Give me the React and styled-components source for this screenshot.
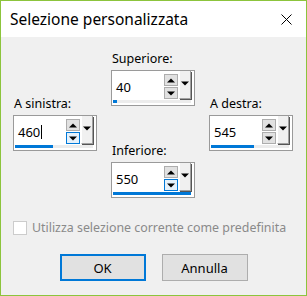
import { createGlobalStyle, styled } from 'styled-components';

const GlobalStyle = createGlobalStyle`
  html, body {
    margin: 0;
    padding: 0;
    background: #f0f0f0;
  }
  body {
    font-family: "Noto Sans", "Open Sans", sans-serif;
  }
`;

const Window = styled.div`
  width: 307px;
  height: 296px;
  box-sizing: border-box;
  border: 1px solid #8cc43c;
  background: #f0f0f0;
  display: flex;
  flex-direction: column;
`;

const TitleBar = styled.div`
  height: 36px;
  background: #ffffff;
  display: flex;
  align-items: center;
  justify-content: space-between;
  padding: 0 14px 0 9px;
  font-size: 15.5px;
  color: #000;
`;

const Title = styled.div`
  padding-bottom: 1px;
`;

const Fields = styled.div`
  display: flex;
  gap: 14px;
  padding: 0 12px;
`;

const Column = styled.div`
  width: 84px;
  display: flex;
  flex-direction: column;
  padding-top: ${(p) => p.top}px;
`;

const Group = styled.div`
  display: flex;
  flex-direction: column;
  gap: 3px;
  margin-bottom: ${(p) => p.after || 0}px;
`;

const Label = styled.div`
  font-size: 12.5px;
  line-height: 16px;
  color: #000;
  padding-left: 1px;
`;

const Box = styled.div`
  height: 36px;
  box-sizing: border-box;
  border: 1px solid #9a9a9a;
  background: #fff;
  display: flex;
  flex-direction: column;
`;

const Row = styled.div`
  height: 29px;
  display: flex;
`;

const Value = styled.div`
  flex: 1;
  display: flex;
  align-items: center;
  padding: 3px 0 0 4px;
  font-size: 13px;
  color: #000;
`;

const Caret = styled.span`
  display: inline-block;
  width: 1px;
  height: 14px;
  background: #000;
  margin-left: 1px;
`;

const Spins = styled.div`
  display: flex;
  flex-direction: column;
  gap: 1px;
  padding-top: 3px;
`;

const SpinButton = styled.div`
  width: 14px;
  height: 12px;
  box-sizing: border-box;
  border: 1px solid ${(p) => (p.active ? '#0078d7' : '#adadad')};
  background: ${(p) => (p.active ? '#e5f1fb' : '#e1e1e1')};
  display: flex;
  align-items: center;
  justify-content: center;
`;

const DropButton = styled.div`
  width: 12px;
  height: 28px;
  margin: 0 3px 0 1px;
  box-sizing: border-box;
  border-left: 1px solid #ffffff;
  border-right: 1px solid #a0a0a0;
  border-bottom: 1px solid #a0a0a0;
  box-shadow: 1px 1px 0 #555;
  background: #f0f0f0;
  display: flex;
  align-items: center;
  justify-content: center;
  padding-bottom: 2px;
`;

const Track = styled.div`
  height: 3px;
  margin: 0 3px 0 1px;
  background: #ececec;
`;

const Bar = styled.div`
  height: 3px;
  background: #0078d7;
`;

const CheckRow = styled.div`
  display: flex;
  align-items: center;
  gap: 5px;
  padding: 21px 0 0 12px;
  font-size: 12.4px;
  color: #8a8a8a;
`;

const CheckBox = styled.div`
  width: 14px;
  height: 14px;
  box-sizing: border-box;
  border: 1px solid #cccccc;
  background: #fff;
`;

const Buttons = styled.div`
  display: flex;
  justify-content: center;
  gap: 16px;
  padding-top: 18px;
`;

const Button = styled.div`
  width: 86px;
  height: 27px;
  box-sizing: border-box;
  border: ${(p) => (p.primary ? '2px solid #0078d7' : '1px solid #adadad')};
  background: #e1e1e1;
  display: flex;
  align-items: center;
  justify-content: center;
  font-size: 13px;
  color: #000;
`;

const Up = () => (
  <svg width="8" height="5" viewBox="0 0 8 5">
    <polygon points="0,4.5 8,4.5 4,0.5" fill="#000" />
  </svg>
);

const Down = () => (
  <svg width="8" height="5" viewBox="0 0 8 5">
    <polygon points="0,0.5 8,0.5 4,4.5" fill="#000" />
  </svg>
);

const SpinField = ({ label, value, bar, caret, active, after }) => (
  <Group after={after}>
    <Label>{label}</Label>
    <Box>
      <Row>
        <Value>
          {value}
          {caret && <Caret />}
        </Value>
        <Spins>
          <SpinButton>
            <Up />
          </SpinButton>
          <SpinButton active={active}>
            <Down />
          </SpinButton>
        </Spins>
        <DropButton>
          <Down />
        </DropButton>
      </Row>
      <Track>
        <Bar style={{ width: bar }} />
      </Track>
    </Box>
  </Group>
);

const App = () => {
  return (
    <Window>
      <GlobalStyle />
      <TitleBar>
        <Title>Selezione personalizzata</Title>
        <svg width="11" height="11" viewBox="0 0 11 11">
          <path d="M0.5 0.5 L10.5 10.5 M10.5 0.5 L0.5 10.5" stroke="#000" strokeWidth="1" />
        </svg>
      </TitleBar>
      <Fields>
        <Column top={59}>
          <SpinField label="A sinistra:" value="460" bar={38} caret active />
        </Column>
        <Column top={14}>
          <SpinField label="Superiore:" value="40" bar={4} after={37} />
          <SpinField label="Inferiore:" value="550" bar={78} active />
        </Column>
        <Column top={59}>
          <SpinField label="A destra:" value="545" bar={43} />
        </Column>
      </Fields>
      <CheckRow>
        <CheckBox />
        Utilizza selezione corrente come predefinita
      </CheckRow>
      <Buttons>
        <Button primary>OK</Button>
        <Button>Annulla</Button>
      </Buttons>
    </Window>
  );
};

export default App;
